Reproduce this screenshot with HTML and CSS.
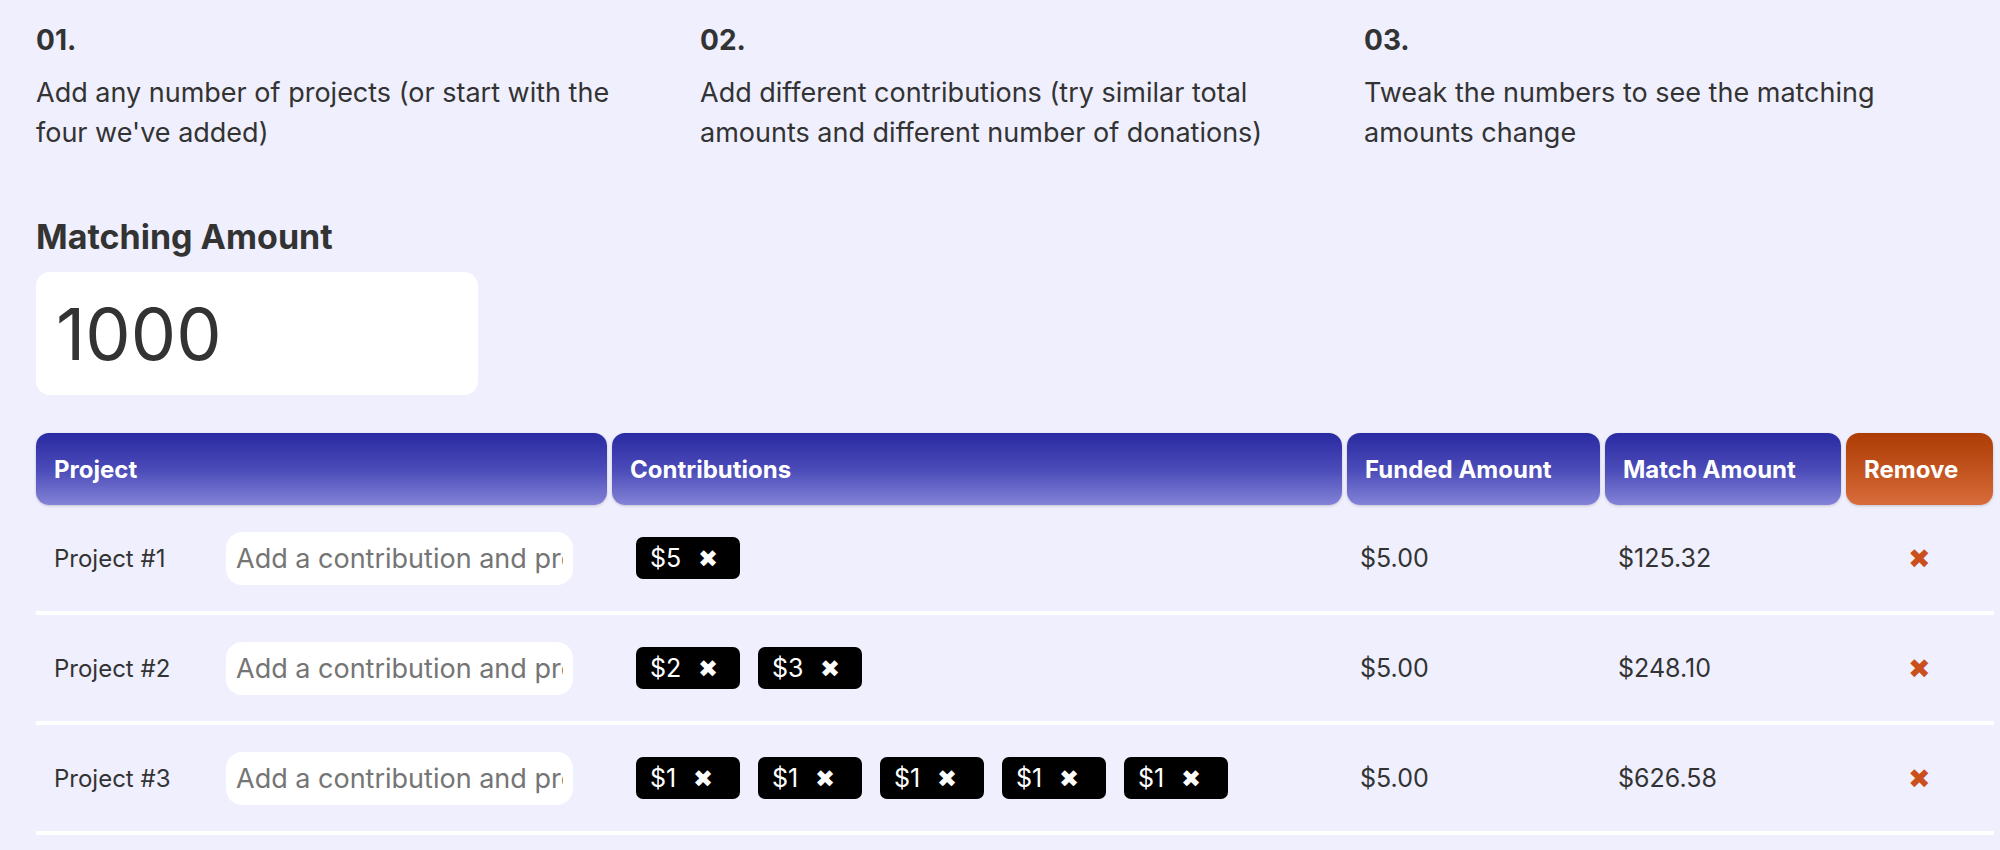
FILE: index.html
```html
<!DOCTYPE html>
<html lang="en">
<head>
  <meta charset="UTF-8">
  <meta name="viewport" content="width=device-width, initial-scale=1.0">
  <title>Quadratic Funding Calculator</title>
  <link rel="stylesheet" href="styles.css">
</head>
<body>
  <div class="container">
    <!-- How it works -->
    <div class="steps">
      <div class="step">
        <h3 class="step-num">01.</h3>
        <p class="step-text">Add any number of projects (or start with the four we've added)</p>
      </div>
      <div class="step">
        <h3 class="step-num">02.</h3>
        <p class="step-text">Add different contributions (try similar total amounts and different number of donations)</p>
      </div>
      <div class="step">
        <h3 class="step-num">03.</h3>
        <p class="step-text">Tweak the numbers to see the matching amounts change</p>
      </div>
    </div>

    <!-- Matching pool -->
    <h2 class="match-title">Matching Amount</h2>
    <input class="match-input" type="text" value="1000">

    <!-- Projects table -->
    <div class="grid-table">
      <div class="row head">
        <div class="th">Project</div>
        <div class="th">Contributions</div>
        <div class="th">Funded Amount</div>
        <div class="th">Match Amount</div>
        <div class="th th-remove">Remove</div>
      </div>

      <div class="row">
        <div class="td td-project">
          <span class="project-name">Project #1</span>
          <input class="contrib-input" type="text" placeholder="Add a contribution and press enter">
        </div>
        <div class="td td-chips">
          <span class="chip">$5 <span class="chip-x">✖</span></span>
        </div>
        <div class="td">$5.00</div>
        <div class="td">$125.32</div>
        <div class="td td-remove"><span class="remove-x">✖</span></div>
      </div>

      <div class="row">
        <div class="td td-project">
          <span class="project-name">Project #2</span>
          <input class="contrib-input" type="text" placeholder="Add a contribution and press enter">
        </div>
        <div class="td td-chips">
          <span class="chip">$2 <span class="chip-x">✖</span></span>
          <span class="chip">$3 <span class="chip-x">✖</span></span>
        </div>
        <div class="td">$5.00</div>
        <div class="td">$248.10</div>
        <div class="td td-remove"><span class="remove-x">✖</span></div>
      </div>

      <div class="row">
        <div class="td td-project">
          <span class="project-name">Project #3</span>
          <input class="contrib-input" type="text" placeholder="Add a contribution and press enter">
        </div>
        <div class="td td-chips">
          <span class="chip">$1 <span class="chip-x">✖</span></span>
          <span class="chip">$1 <span class="chip-x">✖</span></span>
          <span class="chip">$1 <span class="chip-x">✖</span></span>
          <span class="chip">$1 <span class="chip-x">✖</span></span>
          <span class="chip">$1 <span class="chip-x">✖</span></span>
        </div>
        <div class="td">$5.00</div>
        <div class="td">$626.58</div>
        <div class="td td-remove"><span class="remove-x">✖</span></div>
      </div>
    </div>
  </div>
</body>
</html>
```

FILE: styles.css
```css
body {
  font-family: Inter, "Noto Sans", sans-serif;
  background-color: #efeffd;
  color: #333;
  margin: 0;
  padding: 0;
}
.container {
  padding: 24px 6px 0 36px;
}

/* steps */
.steps {
  display: grid;
  grid-template-columns: repeat(3, 590px);
  column-gap: 74px;
}
.step-num {
  font-size: 28px;
  line-height: 32px;
  font-weight: 700;
  margin: 0 0 17px;
}
.step-text {
  font-size: 27px;
  line-height: 40px;
  margin: 0;
}

/* matching amount */
.match-title {
  font-size: 34px;
  line-height: 40px;
  font-weight: 700;
  margin: 64px 0 15px;
}
.match-input {
  display: block;
  width: 442px;
  height: 123px;
  box-sizing: border-box;
  border: none;
  border-radius: 14px;
  background: #fff;
  padding: 0 20px;
  font-family: inherit;
  font-size: 72px;
  color: #333;
  outline: none;
}

/* table */
.grid-table {
  margin-top: 38px;
}
.row {
  display: grid;
  grid-template-columns: 571px 730px 253px 236px 147px;
  column-gap: 5px;
  height: 106px;
  border-bottom: 4px solid #fff;
}
.row.head {
  height: 72px;
  border-bottom: none;
}
.th {
  display: flex;
  align-items: center;
  padding: 0 18px;
  border-radius: 13px;
  background: linear-gradient(to bottom, #2a2aa2 0%, #4a4ab8 50%, #8383d8 100%);
  color: #fff;
  font-size: 24px;
  font-weight: 700;
  box-shadow: 0 1px 3px rgba(0, 0, 0, 0.18);
}
.th-remove {
  background: linear-gradient(to bottom, #ad3c06 0%, #c2531e 50%, #d96c3c 100%);
}
.td {
  display: flex;
  align-items: center;
  padding: 0 13px;
  font-size: 25px;
}
.td-project {
  padding-left: 18px;
  font-size: 24px;
}
.project-name {
  width: 172px;
  flex-shrink: 0;
}
.contrib-input {
  width: 347px;
  height: 53px;
  box-sizing: border-box;
  border: none;
  border-radius: 16px;
  background: #fff;
  padding: 0 10px;
  font-family: inherit;
  font-size: 27px;
  color: #333;
  outline: none;
}
.contrib-input::placeholder {
  color: #757575;
}
.td-chips {
  padding-left: 24px;
  gap: 18px;
}
.chip {
  display: inline-flex;
  align-items: center;
  width: 104px;
  height: 42px;
  box-sizing: border-box;
  padding-left: 14px;
  border-radius: 7px;
  background: #000;
  color: #fff;
  font-size: 25px;
}
.chip-x {
  font-size: 24px;
  margin-left: 17px;
}
.td-remove {
  justify-content: center;
}
.remove-x {
  color: #c9501c;
  font-size: 27px;
}
```
